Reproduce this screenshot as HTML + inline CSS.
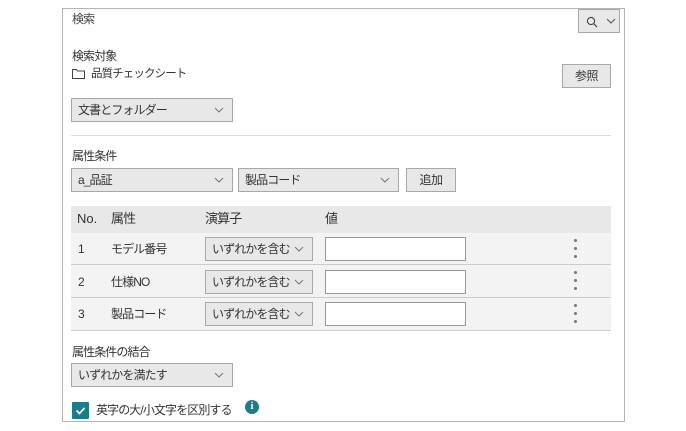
<!DOCTYPE html>
<html><head><meta charset="utf-8"><style>
*{box-sizing:border-box;margin:0;padding:0}
body{width:686px;height:431px;background:#fff;font-family:"Liberation Sans","Noto Sans CJK JP",sans-serif;font-size:12px;line-height:16px;color:#333;position:relative;overflow:hidden}
.a{position:absolute;white-space:nowrap}
.j{letter-spacing:-0.9px}
.panel{left:62px;top:8px;width:563px;height:414px;border:1px solid #b5b5b5}
.sel{background:#e8e8e8;border:1px solid #a8a8a8;height:24px;line-height:22px;padding-left:6px;font-size:12px;color:#333;letter-spacing:-0.9px}
.sel svg{position:absolute;right:8px;top:8px}
.btn{background:#e8e8e8;border:1px solid #a8a8a8;text-align:center;line-height:22px;font-size:12px;letter-spacing:-0.5px}
.inp{background:#fff;border:1px solid #999;height:24px}
.dot{width:3px;height:3px;border-radius:50%;background:#777;position:absolute}
</style></head><body>
<div class="a panel"></div>
<div class="a j" style="left:72px;top:11px;color:#444">検索</div>
<div class="a btn" style="left:578px;top:9px;width:42px;height:24px">
<svg class="a" style="left:7px;top:6px" width="12" height="12" viewBox="0 0 12 12"><circle cx="5" cy="5" r="3.6" fill="none" stroke="#444" stroke-width="1.1"/><path d="M7.6 7.6L11 11" stroke="#444" stroke-width="1.2"/></svg>
<svg class="a" style="left:27px;top:8px" width="10" height="6" viewBox="0 0 10 6"><path d="M1 1l4 4 4-4" fill="none" stroke="#555"/></svg></div>
<div class="a j" style="left:72px;top:48px">検索対象</div>
<svg class="a" style="left:72px;top:68px" width="13" height="11" viewBox="0 0 13 11"><path d="M.5 1.5h4l1 1.5h7v7.5H.5z" fill="none" stroke="#444"/></svg>
<div class="a j" style="left:91px;top:66px;font-size:11.5px">品質チェックシート</div>
<div class="a btn" style="left:562px;top:64px;width:49px;height:24px">参照</div>
<div class="a sel" style="left:71px;top:98px;width:162px">文書とフォルダー<svg width="10" height="6" viewBox="0 0 10 6"><path d="M1 1l4 4 4-4" fill="none" stroke="#777"/></svg></div>
<div class="a" style="left:71px;top:135px;width:540px;height:1px;background:#ddd"></div>
<div class="a j" style="left:72px;top:148px">属性条件</div>
<div class="a sel" style="left:71px;top:168px;width:162px">a_品証<svg width="10" height="6" viewBox="0 0 10 6"><path d="M1 1l4 4 4-4" fill="none" stroke="#777"/></svg></div>
<div class="a sel" style="left:238px;top:168px;width:161px">製品コード<svg width="10" height="6" viewBox="0 0 10 6"><path d="M1 1l4 4 4-4" fill="none" stroke="#777"/></svg></div>
<div class="a btn" style="left:406px;top:168px;width:50px;height:24px">追加</div>
<div class="a" style="left:71px;top:206px;width:540px;height:27px;background:#e8e8e8"></div>
<div class="a" style="left:77px;top:211px;font-size:13px">No.</div>
<div class="a j" style="left:111px;top:211px;font-size:13px">属性</div>
<div class="a j" style="left:205px;top:211px;font-size:13px">演算子</div>
<div class="a" style="left:325px;top:211px;font-size:13px">値</div>
<div class="a" style="left:71px;top:233px;width:540px;height:32px;background:#f3f3f3;border-bottom:1px solid #ccc"></div>
<div class="a" style="left:71px;top:265px;width:540px;height:33px;background:#f3f3f3;border-bottom:1px solid #ccc"></div>
<div class="a" style="left:71px;top:298px;width:540px;height:33px;background:#f3f3f3;border-bottom:1px solid #ccc"></div>
<div class="a" style="left:78px;top:241px">1</div><div class="a j" style="left:111px;top:241px">モデル番号</div>
<div class="a" style="left:78px;top:274px">2</div><div class="a j" style="left:111px;top:274px">仕様NO</div>
<div class="a" style="left:78px;top:306px">3</div><div class="a j" style="left:111px;top:306px">製品コード</div>
<div class="a sel" style="left:205px;top:237px;width:108px">いずれかを含む<svg width="10" height="6" viewBox="0 0 10 6"><path d="M1 1l4 4 4-4" fill="none" stroke="#777"/></svg></div>
<div class="a sel" style="left:205px;top:270px;width:108px">いずれかを含む<svg width="10" height="6" viewBox="0 0 10 6"><path d="M1 1l4 4 4-4" fill="none" stroke="#777"/></svg></div>
<div class="a sel" style="left:205px;top:302px;width:108px">いずれかを含む<svg width="10" height="6" viewBox="0 0 10 6"><path d="M1 1l4 4 4-4" fill="none" stroke="#777"/></svg></div>
<div class="a inp" style="left:325px;top:237px;width:141px"></div>
<div class="a inp" style="left:325px;top:270px;width:141px"></div>
<div class="a inp" style="left:325px;top:302px;width:141px"></div>
<div class="dot" style="left:574px;top:239px"></div><div class="dot" style="left:574px;top:247px"></div><div class="dot" style="left:574px;top:255px"></div>
<div class="dot" style="left:574px;top:271px"></div><div class="dot" style="left:574px;top:279px"></div><div class="dot" style="left:574px;top:287px"></div>
<div class="dot" style="left:574px;top:304px"></div><div class="dot" style="left:574px;top:312px"></div><div class="dot" style="left:574px;top:320px"></div>
<div class="a j" style="left:72px;top:344px">属性条件の結合</div>
<div class="a sel" style="left:71px;top:363px;width:162px">いずれかを満たす<svg width="10" height="6" viewBox="0 0 10 6"><path d="M1 1l4 4 4-4" fill="none" stroke="#777"/></svg></div>
<div class="a" style="left:72px;top:402px;width:17px;height:17px;background:#1b7d8c;border-radius:1px"><svg width="17" height="17" viewBox="0 0 17 17"><path d="M4.5 8.5l3 3 5-5.5" fill="none" stroke="#fff" stroke-width="1.8"/></svg></div>
<div class="a j" style="left:96px;top:402px">英字の大/小文字を区別する</div>
<div class="a" style="left:245px;top:400px;width:14px;height:14px;border-radius:50%;background:#1b7d8c;color:#fff;font:bold 10px/14px 'Liberation Serif',serif;text-align:center">i</div>
</body></html>
